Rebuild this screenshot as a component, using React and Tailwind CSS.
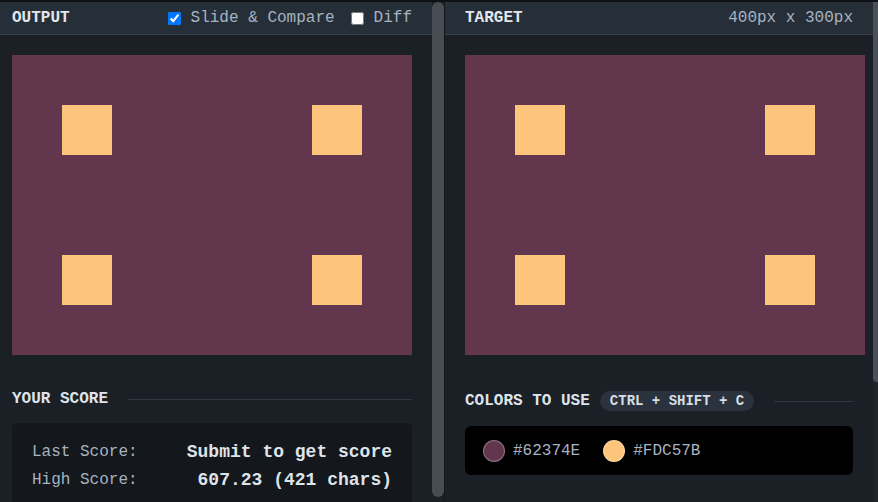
const font = { fontFamily: '"Liberation Mono", "DejaVu Sans Mono", monospace' };

const squares = [
  "left-[50px] top-[50px]",
  "left-[300px] top-[50px]",
  "left-[50px] top-[200px]",
  "left-[300px] top-[200px]",
];

const Canvas = () => (
  <div className="relative w-[400px] h-[300px] bg-[#62374E] shrink-0">
    {squares.map((pos) => (
      <div key={pos} className={`absolute w-[50px] h-[50px] bg-[#FDC57B] ${pos}`} />
    ))}
  </div>
);

const colors = ["#62374E", "#FDC57B"];

export default function App() {
  return (
    <div
      className="w-[878px] h-[502px] overflow-hidden bg-[#1b1f26] border-t-2 border-[#0e1115] flex"
      style={font}
    >
      {/* output side */}
      <div className="w-[432px] shrink-0 flex flex-col">
        <div className="h-[33px] shrink-0 bg-[#262f38] border-b border-[#34404b] flex items-center justify-between pl-3 pr-5">
          <span className="text-[16px] font-bold text-[#e2e6ee]">OUTPUT</span>
          <div className="flex items-center text-[16px] text-[#a7b3c1]">
            <input type="checkbox" defaultChecked className="w-[13px] h-[13px] m-0 mr-[10px]" />
            <span>Slide &amp; Compare</span>
            <input type="checkbox" className="w-[13px] h-[13px] m-0 ml-4 mr-[10px]" />
            <span>Diff</span>
          </div>
        </div>
        <div className="pl-3 pr-5 pt-5 shrink-0">
          <Canvas />
          <div className="mt-[32px] flex items-center h-6">
            <span className="text-[16px] font-bold text-[#dfe3ea]">YOUR SCORE</span>
            <div className="flex-1 h-px bg-[#2f3740] ml-5" />
          </div>
          <div className="mt-[12px] bg-[#14171b] rounded-md pl-5 pr-5 py-[15px]">
            <div className="flex items-center justify-between h-7">
              <span className="text-[16px] text-[#a7b3c1]">Last Score:</span>
              <span className="text-[18px] font-bold text-[#dfe3ea]">Submit to get score</span>
            </div>
            <div className="flex items-center justify-between h-7">
              <span className="text-[16px] text-[#a7b3c1]">High Score:</span>
              <span className="text-[18px] font-bold text-[#dfe3ea]">607.23 (421 chars)</span>
            </div>
          </div>
        </div>
      </div>

      {/* divider */}
      <div className="w-[13px] shrink-0 flex bg-[#1b1f26]">
        <div className="w-[12px] h-[495px] rounded-full bg-[#474d53]" />
        <div className="w-px bg-[#13161b]" />
      </div>

      {/* target side */}
      <div className="w-[428px] shrink-0 flex flex-col">
        <div className="h-[33px] shrink-0 bg-[#262f38] border-b border-[#34404b] flex items-center justify-between pl-5 pr-5">
          <span className="text-[16px] font-bold text-[#e2e6ee]">TARGET</span>
          <span className="text-[16px] text-[#a7b3c1]">400px x 300px</span>
        </div>
        <div className="pl-5 pr-5 pt-5">
          <Canvas />
          <div className="mt-[34px] flex items-center h-6">
            <span className="text-[16px] font-bold text-[#dfe3ea]">COLORS TO USE</span>
            <span className="ml-[10px] h-5 px-[10px] rounded-full bg-[#2a333d] text-[14px] font-bold text-[#d8dde5] flex items-center">
              CTRL + SHIFT + C
            </span>
            <div className="flex-1 h-px bg-[#2f3740] ml-5" />
          </div>
          <div className="mt-[13px] h-[49px] bg-black rounded-md flex items-center px-[18px] gap-[23px]">
            {colors.map((c) => (
              <div key={c} className="flex items-center gap-2">
                <div
                  className="w-[22px] h-[22px] rounded-full border border-white/30"
                  style={{ backgroundColor: c }}
                />
                <span className="text-[16px] text-[#a7b3c1]">{c}</span>
              </div>
            ))}
          </div>
        </div>
      </div>

      {/* scrollbar */}
      <div className="w-[5px] shrink-0 bg-[#1f242b]">
        <div className="h-[380px] rounded-bl bg-[#4a5057]" />
      </div>
    </div>
  );
}
